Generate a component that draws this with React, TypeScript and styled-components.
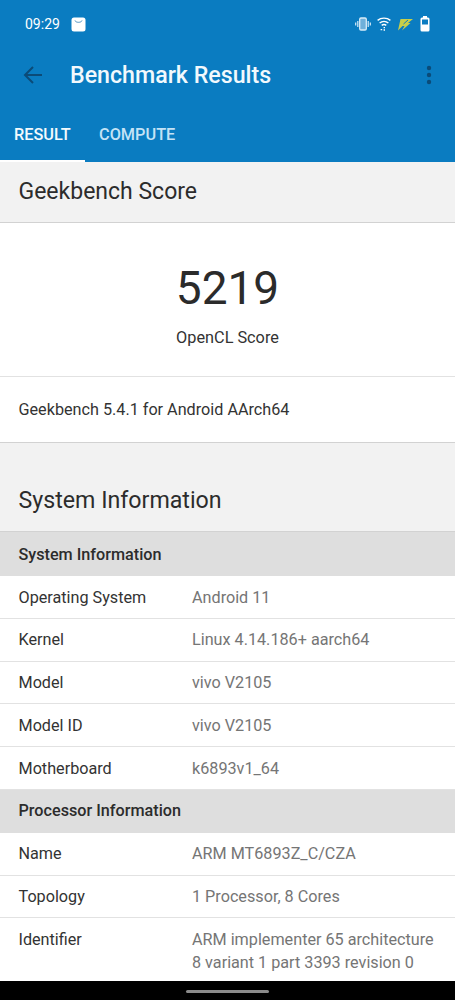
import React from 'react';
import styled, { createGlobalStyle } from 'styled-components';

const GlobalStyle = createGlobalStyle`
  html, body {
    margin: 0;
    padding: 0;
    background: #fff;
    font-family: Roboto, "Liberation Sans", sans-serif;
  }
`;

type Row = { label: string; value: React.ReactNode; tall?: boolean };

const systemRows: Row[] = [
  { label: 'Operating System', value: 'Android 11' },
  { label: 'Kernel', value: 'Linux 4.14.186+ aarch64' },
  { label: 'Model', value: 'vivo V2105' },
  { label: 'Model ID', value: 'vivo V2105' },
  { label: 'Motherboard', value: 'k6893v1_64' },
];

const processorRows: Row[] = [
  { label: 'Name', value: 'ARM MT6893Z_C/CZA' },
  { label: 'Topology', value: '1 Processor, 8 Cores' },
  {
    label: 'Identifier',
    value: (
      <>
        ARM implementer 65 architecture
        <br />8 variant 1 part 3393 revision 0
      </>
    ),
    tall: true,
  },
];

function App() {
  return (
    <>
      <GlobalStyle />
      <Page>
        <Header>
          <StatusBar>
            <StatusLeft>
              <Clock>09:29</Clock>
              <svg width="15" height="15" viewBox="0 0 15 15">
                <rect x="0.5" y="0.5" width="14" height="14" rx="2.5" fill="#fff" />
                <path d="M4 3.5c.6 2.4 6.4 2.4 7 0" fill="none" stroke="#4a8fc0" strokeWidth="1" />
              </svg>
            </StatusLeft>
            <StatusRight>
              <svg width="16" height="14" viewBox="0 0 16 14" fill="none">
                <rect x="4.7" y="1" width="6.6" height="12" rx="1.3" stroke="#d8ecf8" strokeWidth="1.3" fill="#6fb0da" />
                <path d="M2.8 4v6M.7 5.5v3M13.2 4v6M15.3 5.5v3" stroke="#d8ecf8" strokeWidth="1.2" />
              </svg>
              <svg width="14" height="14" viewBox="0 0 14 14" fill="none" stroke="#fff" strokeWidth="1.4">
                <path d="M.6 3.4c3.6-3 9.2-3 12.8 0M2.6 6c2.5-2 6.3-2 8.8 0M4.7 8.4c1.3-1 3.3-1 4.6 0" />
                <path d="M3.6 12.6h1.6M6.6 10.6h1.4M6.6 13h1.4" strokeWidth="1.4" />
              </svg>
              <svg width="17" height="13" viewBox="0 0 17 13">
                <path d="M3.5 1H16l-5 4h2.5L5 12.5 7.5 8H5.5L1 12.5z" fill="#c9cf48" />
                <path d="M11 2 6.5 6" fill="none" stroke="#0a7cc1" strokeWidth="1" />
              </svg>
              <svg width="10" height="16" viewBox="0 0 10 16">
                <rect x="3" y="0" width="4" height="2" fill="#fff" />
                <rect x="0.5" y="1.5" width="9" height="14" rx="1.5" fill="#fff" />
                <rect x="2" y="3.5" width="6" height="5" fill="#0a7cc1" />
              </svg>
            </StatusRight>
          </StatusBar>
          <AppBar>
            <svg width="20" height="18" viewBox="0 0 20 18" fill="none" stroke="#0b4b78" strokeWidth="2">
              <path d="M19 9H2M10 1 2 9l8 8" />
            </svg>
            <Title>Benchmark Results</Title>
            <svg width="6" height="20" viewBox="0 0 6 20" fill="#0b4b78">
              <circle cx="3" cy="3" r="2.2" />
              <circle cx="3" cy="10" r="2.2" />
              <circle cx="3" cy="17" r="2.2" />
            </svg>
          </AppBar>
          <Tabs>
            <Tab $active>RESULT</Tab>
            <Tab>COMPUTE</Tab>
          </Tabs>
        </Header>

        <ScoreHeading>Geekbench Score</ScoreHeading>
        <ScorePanel>
          <ScoreValue>5219</ScoreValue>
          <ScoreLabel>OpenCL Score</ScoreLabel>
        </ScorePanel>
        <VersionRow>Geekbench 5.4.1 for Android AArch64</VersionRow>

        <InfoHeading>System Information</InfoHeading>
        <Section>System Information</Section>
        {systemRows.map((row) => (
          <InfoRow key={row.label}>
            <RowLabel>{row.label}</RowLabel>
            <RowValue>{row.value}</RowValue>
          </InfoRow>
        ))}
        <Section>Processor Information</Section>
        {processorRows.map((row) => (
          <InfoRow key={row.label} $tall={row.tall}>
            <RowLabel>{row.label}</RowLabel>
            <RowValue>{row.value}</RowValue>
          </InfoRow>
        ))}
        <NavBar>
          <NavHandle />
        </NavBar>
      </Page>
    </>
  );
}

const Page = styled.div`
  width: 455px;
  height: 1000px;
  overflow: hidden;
  display: flex;
  flex-direction: column;
  background: #fff;
`;

const Header = styled.header`
  height: 162px;
  flex: none;
  background: #0a7cc1;
  display: flex;
  flex-direction: column;
`;

const StatusBar = styled.div`
  height: 48px;
  display: flex;
  align-items: center;
  justify-content: space-between;
  padding: 0 25px;
`;

const StatusLeft = styled.div`
  display: flex;
  align-items: center;
  gap: 11px;
`;

const Clock = styled.span`
  color: #fff;
  font-size: 14px;
`;

const StatusRight = styled.div`
  display: flex;
  align-items: center;
  gap: 6px;
`;

const AppBar = styled.div`
  height: 54px;
  display: flex;
  align-items: center;
  padding: 0 23px;
`;

const Title = styled.h1`
  flex: 1;
  margin: 0 0 0 27px;
  color: #f2f9fd;
  font-size: 23.2px;
  font-weight: 500;
`;

const Tabs = styled.div`
  flex: 1;
  display: flex;
`;

const Tab = styled.div<{ $active?: boolean }>`
  width: ${(p) => (p.$active ? '85px' : 'auto')};
  padding: 6px 14px 0;
  box-sizing: border-box;
  display: flex;
  align-items: center;
  color: ${(p) => (p.$active ? '#f4fafd' : '#c4e3f6')};
  font-size: 16.3px;
  font-weight: 500;
  border-bottom: 2px solid ${(p) => (p.$active ? '#fff' : 'transparent')};
`;

const ScoreHeading = styled.div`
  height: 61px;
  flex: none;
  box-sizing: border-box;
  display: flex;
  align-items: center;
  padding: 0 0 1px 18.5px;
  background: #f2f2f2;
  border-bottom: 1px solid #d2d2d2;
  color: #2c2c2c;
  font-size: 23px;
`;

const ScorePanel = styled.div`
  height: 154px;
  flex: none;
  box-sizing: border-box;
  padding-top: 36px;
  display: flex;
  flex-direction: column;
  align-items: center;
  border-bottom: 1px solid #e2e2e2;
`;

const ScoreValue = styled.div`
  color: #2b2b2b;
  font-size: 46px;
  line-height: 58px;
`;

const ScoreLabel = styled.div`
  margin-top: 11px;
  color: #333;
  font-size: 16.3px;
`;

const VersionRow = styled.div`
  height: 66px;
  flex: none;
  box-sizing: border-box;
  display: flex;
  align-items: center;
  padding-left: 18.5px;
  border-bottom: 1px solid #d2d2d2;
  color: #333;
  font-size: 16.2px;
`;

const InfoHeading = styled.div`
  height: 89px;
  flex: none;
  box-sizing: border-box;
  padding: 43px 0 0 18.5px;
  background: #f2f2f2;
  border-bottom: 1px solid #d2d2d2;
  color: #2c2c2c;
  font-size: 23.2px;
`;

const Section = styled.div`
  height: 44px;
  flex: none;
  box-sizing: border-box;
  display: flex;
  align-items: center;
  padding-left: 18.5px;
  background: #dedede;
  color: #2c2c2c;
  font-size: 16.2px;
  font-weight: 500;

  & ~ & {
    height: 42.8px;
    padding-bottom: 1px;
  }
`;

const InfoRow = styled.div<{ $tall?: boolean }>`
  height: ${(p) => (p.$tall ? '62.4px' : '42.8px')};
  flex: none;
  box-sizing: border-box;
  display: flex;
  padding-top: 9.6px;
  border-bottom: ${(p) => (p.$tall ? 'none' : '1px solid #e2e2e2')};
  font-size: 16.2px;
  line-height: 23px;
`;

const RowLabel = styled.div`
  width: 192px;
  padding-left: 18.5px;
  box-sizing: border-box;
  color: #333;
`;

const RowValue = styled.div`
  color: #757575;
`;

const NavBar = styled.div`
  flex: 1;
  background: #000;
  display: flex;
  justify-content: center;
  padding-top: 9px;
`;

const NavHandle = styled.div`
  width: 83px;
  height: 3px;
  border-radius: 2px;
  background: #8a8a8a;
`;

export default App;
